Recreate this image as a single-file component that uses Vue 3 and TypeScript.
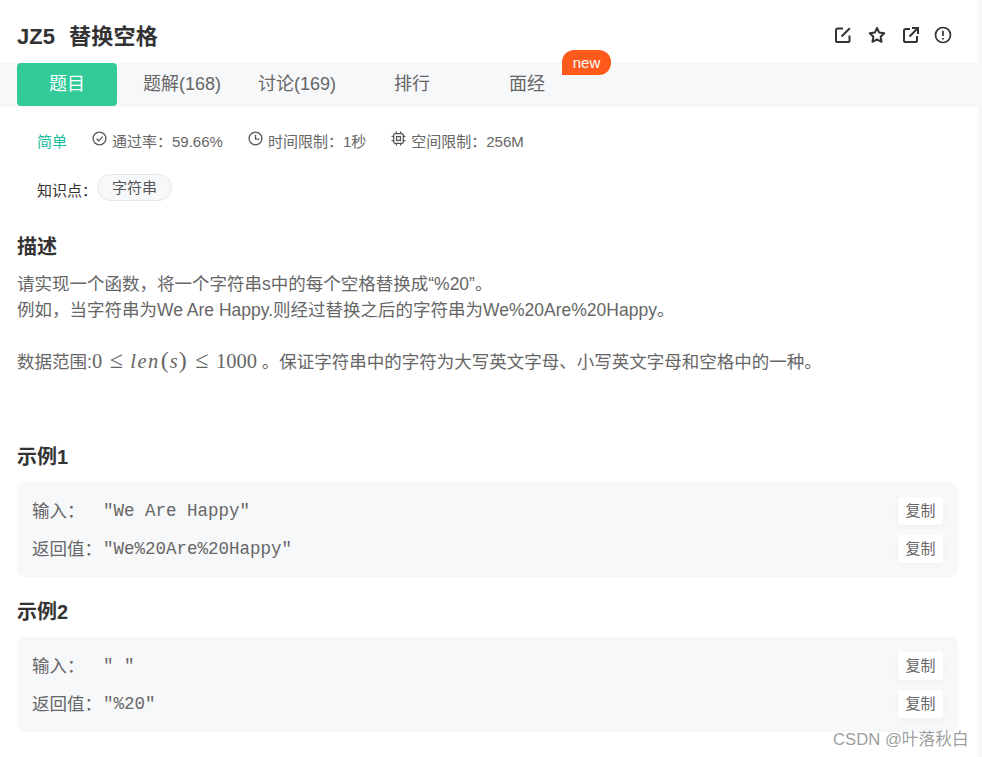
<template>
  <div class="page">
    <div class="title-row">
      <h1 class="title">JZ5<span class="title-cn">替换空格</span></h1>
      <div class="actions">
        <svg viewBox="0 0 18 18" class="act">
          <path d="M9 2.500H3.600A1.600 1.600 0 0 0 2 4.100v10.300A1.600 1.600 0 0 0 3.600 16h10.300a1.600 1.600 0 0 0 1.600-1.600V9.500" />
          <path d="M7.500 10.500 15.800 2.200" />
        </svg>
        <svg viewBox="0 0 18 18" class="act">
          <path d="M9 2l2.200 4.600 5 .7-3.600 3.500.9 5L9 13.400l-4.500 2.400.9-5L1.800 7.300l5-.7z" stroke-linejoin="round" />
        </svg>
        <svg viewBox="0 0 18 18" class="act">
          <path d="M8 3H3.600A1.600 1.600 0 0 0 2 4.600v9.800A1.600 1.600 0 0 0 3.600 16h9.800a1.600 1.600 0 0 0 1.600-1.600V10" />
          <path d="M7.500 10.500 15.500 2.500M10 2H16v6" />
        </svg>
        <svg viewBox="0 0 18 18" class="act">
          <circle cx="9" cy="9" r="7.500" />
          <path d="M9 4.800v5.200M9 12v1.400" />
        </svg>
      </div>
    </div>

    <div class="tabs">
      <div v-for="(t, i) in tabs" :key="t" class="tab" :class="{ active: i === 0 }">
        {{ t }}
        <span v-if="i === 4" class="badge">new</span>
      </div>
    </div>

    <div class="meta">
      <span class="level">简单</span>
      <span class="meta-item">
        <svg viewBox="0 0 14 14" class="mi">
          <circle cx="7" cy="7" r="6" />
          <path d="M4.300 7.200 6.300 9.200 9.900 5.200" />
        </svg>
        通过率：59.66%
      </span>
      <span class="meta-item">
        <svg viewBox="0 0 14 14" class="mi">
          <circle cx="7" cy="7" r="6" />
          <path d="M7 3.500V7.500H10.500" />
        </svg>
        时间限制：1秒
      </span>
      <span class="meta-item">
        <svg viewBox="0 0 14 14" class="mi">
          <rect x="2.500" y="2.500" width="9" height="9" rx="1.500" />
          <rect x="5.200" y="5.200" width="3.600" height="3.600" />
          <path d="M5 0.500v2M9 0.500v2M5 11.500v2M9 11.500v2M0.500 5h2M0.500 9h2M11.500 5h2M11.500 9h2" />
        </svg>
        空间限制：256M
      </span>
    </div>

    <div class="topic">
      <span class="topic-label">知识点：</span>
      <span class="tag">字符串</span>
    </div>

    <h2 class="section desc-title">描述</h2>
    <div class="desc">
      <div>请实现一个函数，将一个字符串s中的每个空格替换成“%20”。</div>
      <div>例如，当字符串为We Are Happy.则经过替换之后的字符串为We%20Are%20Happy。</div>
      <div class="blank"></div>
      <div>
        数据范围:<span class="math">0<span class="rel">≤</span><i class="var">len</i><span class="paren">(</span><i>s</i><span class="paren">)</span><span class="rel">≤</span>1000</span> 。保证字符串中的字符为大写英文字母、小写英文字母和空格中的一种。
      </div>
    </div>

    <template v-for="(ex, i) in examples" :key="i">
      <h2 class="section ex-title" :class="{ first: i === 0 }">示例{{ i + 1 }}</h2>
      <div class="example">
        <div class="ex-row">
          <span class="ex-label">输入：</span>
          <span class="ex-code">{{ ex.input }}</span>
          <button class="copy">复制</button>
        </div>
        <div class="ex-row">
          <span class="ex-label">返回值：</span>
          <span class="ex-code">{{ ex.output }}</span>
          <button class="copy">复制</button>
        </div>
      </div>
    </template>

    <div class="watermark">CSDN @叶落秋白</div>
  </div>
</template>

<script setup lang="ts">
const tabs: string[] = ['题目', '题解(168)', '讨论(169)', '排行', '面经']

const examples = [
  { input: '"We Are Happy"', output: '"We%20Are%20Happy"' },
  { input: '" "', output: '"%20"' }
]
</script>

<style>
html,
body {
  background: #f7f8fa;
}
</style>

<style scoped>
.page {
  position: relative;
  width: 978px;
  height: 757px;
  overflow: hidden;
  background: #fff;
  font-family: 'Liberation Sans', 'Noto Sans CJK SC', sans-serif;
  color: #666;
}
.title-row {
  height: 63px;
  padding: 4px 26px 0 17px;
  box-sizing: border-box;
  display: flex;
  align-items: center;
  justify-content: space-between;
}
.title {
  margin: 0;
  font-size: 22px;
  font-weight: 700;
  color: #333;
}
.title-cn {
  margin-left: 14px;
  letter-spacing: 0.3px;
}
.actions {
  display: flex;
  gap: 16px;
  margin-top: 3px;
}
.act {
  width: 18px;
  height: 18px;
  fill: none;
  stroke: #333;
  stroke-width: 2;
}
.act:last-child {
  margin-left: -2px;
  stroke-width: 1.700;
}
.tabs {
  height: 44px;
  background: #f7f8fa;
  padding-left: 17px;
  display: flex;
  gap: 15px;
}
.tab {
  position: relative;
  width: 100px;
  height: 43px;
  line-height: 43px;
  text-align: center;
  font-size: 18px;
  color: #666;
}
.tab.active {
  background: #32ca99;
  color: #fff;
  border-radius: 4px;
}
.badge {
  position: absolute;
  left: 85px;
  top: -13px;
  width: 49px;
  height: 25px;
  line-height: 25px;
  border-radius: 12px 12px 12px 0;
  background: #fe5a1b;
  color: #fff;
  font-size: 15px;
}
.meta {
  display: flex;
  align-items: center;
  gap: 25px;
  height: 20px;
  margin-top: 23px;
  padding-left: 37px;
  font-size: 15px;
}
.level {
  color: #1abc9c;
}
.meta-item {
  display: flex;
  align-items: center;
  gap: 5px;
}
.mi {
  width: 15px;
  height: 15px;
  fill: none;
  stroke: #555;
  stroke-width: 1.200;
  margin-top: -3px;
}
.topic {
  display: flex;
  align-items: center;
  height: 27px;
  margin-top: 24px;
  padding-left: 37px;
  font-size: 15px;
}
.topic-label {
  color: #333;
  width: 60px;
  padding-top: 4px;
}
.tag {
  width: 75px;
  height: 27px;
  box-sizing: border-box;
  line-height: 25px;
  text-align: center;
  background: #f7f8fa;
  border: 1px solid #e4e6eb;
  border-radius: 14px;
  color: #555;
}
.section {
  margin: 0;
  padding-left: 17px;
  font-size: 20px;
  font-weight: 700;
  line-height: 26px;
  color: #333;
}
.desc-title {
  margin-top: 33px;
}
.desc {
  margin-top: 11px;
  padding-left: 17px;
  font-size: 17.500px;
  line-height: 26px;
}
.blank {
  height: 26px;
}
.math {
  font-family: 'Liberation Serif', serif;
  font-size: 20.500px;
  line-height: 0;
}
.rel {
  font-size: 24px;
  margin: 0 7.500px;
}
.var {
  letter-spacing: 1.500px;
}
.paren {
  font-size: 24px;
  margin: 0 1px;
}
.ex-title {
  margin-top: 22px;
}
.ex-title.first {
  margin-top: 69px;
}
.example {
  margin: 12px 20px 0 17px;
  height: 95px;
  box-sizing: border-box;
  padding: 15px 15px 0;
  background: #f7f8fa;
  border-radius: 8px;
  display: flex;
  flex-direction: column;
  gap: 10px;
}
.ex-row {
  display: flex;
  align-items: center;
  height: 28px;
}
.ex-label {
  flex: none;
  width: 71px;
  margin-top: -4px;
  font-size: 17.500px;
  white-space: nowrap;
}
.ex-code {
  flex: 1;
  font-family: 'Liberation Mono', monospace;
  font-size: 17.500px;
  white-space: pre;
}
.copy {
  width: 45px;
  height: 28px;
  padding: 0 0 3px;
  border: 0;
  border-radius: 3px;
  background: #fff;
  box-shadow: 0 2px 6px rgba(0, 0, 0, 0.04);
  font-family: inherit;
  font-size: 15px;
  color: #666;
}
.watermark {
  position: absolute;
  left: 833px;
  top: 726px;
  font-size: 16.700px;
  color: rgba(100, 100, 100, 0.65);
  white-space: nowrap;
}
</style>
